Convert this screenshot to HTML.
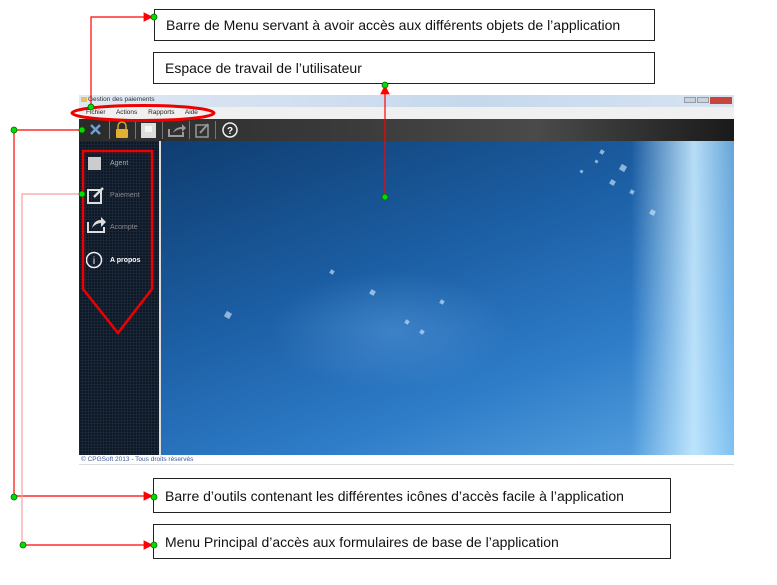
<!DOCTYPE html>
<html><head><meta charset="utf-8"><style>
*{margin:0;padding:0;box-sizing:border-box}
body{width:777px;height:585px;background:#fff;position:relative;overflow:hidden;font-family:"Liberation Sans",sans-serif}
.box{position:absolute;border:1.5px solid #222;background:#fff;font-size:14px;color:#111;padding-left:11px;display:flex;align-items:center;font-family:"Liberation Sans",sans-serif}
.abs{position:absolute}
.sq{position:absolute;background:rgba(220,240,255,.6);transform:rotate(30deg)}
.sep{position:absolute;top:121px;width:1px;height:18px;background:#777}
</style></head><body>
<div class="box" style="left:154px;top:9px;width:501px;height:32px">Barre de Menu servant à avoir accès aux différents objets de l’application</div>
<div class="box" style="left:153px;top:52px;width:502px;height:32px">Espace de travail de l’utilisateur</div>
<div class="box" style="left:153px;top:478px;width:518px;height:35px">Barre d’outils contenant les différentes icônes d’accès facile à l’application</div>
<div class="box" style="left:153px;top:524px;width:518px;height:35px">Menu Principal d’accès aux formulaires de base de l’application</div>

<!-- window -->
<div class="abs" style="left:79px;top:95px;width:655px;height:12px;background:linear-gradient(90deg,#dfe8f3,#c7d8ec 60%,#d6e3f1)"></div>
<div class="abs" style="left:81px;top:97px;width:6px;height:5px;background:#e8c060"></div>
<div class="abs" style="left:88px;top:96px;font-size:6.5px;color:#333">Gestion des paiements</div>
<div class="abs" style="left:684px;top:97px;width:12px;height:6px;background:#c9d3de;border:1px solid #99a"></div>
<div class="abs" style="left:697px;top:97px;width:12px;height:6px;background:#c9d3de;border:1px solid #99a"></div>
<div class="abs" style="left:710px;top:97px;width:22px;height:7px;background:#c8453a"></div>
<div class="abs" style="left:79px;top:107px;width:655px;height:12px;background:#f0f0f0"></div>
<div class="abs" style="left:86px;top:109px;font-size:6.5px;color:#222;word-spacing:9px">Fichier Actions Rapports Aide</div>
<div class="abs" style="left:79px;top:119px;width:655px;height:22px;background:linear-gradient(90deg,#2a2a2a,#3a3a3a 40%,#4a4a4a 70%,#1a1a1a)"></div>
<div class="sep" style="left:109px"></div><div class="sep" style="left:135px"></div><div class="sep" style="left:162px"></div><div class="sep" style="left:189px"></div><div class="sep" style="left:215px"></div>
<svg class="abs" style="left:79px;top:119px" width="180" height="22">
<path d="M12,6L21,15M21,6L12,15" stroke="#6aa0d8" stroke-width="2.5"/>
<path d="M39,10V7a4,4 0 0 1 8,0V10" fill="none" stroke="#d9a428" stroke-width="1.5"/>
<rect x="37" y="10" width="12" height="9" rx="1" fill="#e0b030"/>
<rect x="62" y="4" width="15" height="15" fill="#ddd"/><rect x="66" y="7" width="7" height="6" fill="#f4f4f4"/>
<path d="M90,10V17H104V13" fill="none" stroke="#999" stroke-width="2"/><path d="M94,14Q96,8 103,8V5L107,9L103,13V10Q98,10 94,14Z" fill="#999"/>
<rect x="117" y="6" width="12" height="12" fill="none" stroke="#999" stroke-width="1.5"/><path d="M121,14L129,5" stroke="#999" stroke-width="2"/>
<circle cx="151" cy="11" r="7" fill="none" stroke="#eee" stroke-width="1.5"/>
<text x="151" y="15" text-anchor="middle" font-size="10" font-weight="bold" fill="#fff" font-family="Liberation Sans">?</text>
</svg>
<div class="abs" style="left:79px;top:141px;width:80px;height:314px;background:#0d1826;background-image:linear-gradient(#1a2535 1px,transparent 1px),linear-gradient(90deg,#1a2535 1px,transparent 1px);background-size:3px 3px"></div>
<div class="abs" style="left:159px;top:141px;width:2px;height:314px;background:#ddd"></div>
<div class="abs" style="left:161px;top:141px;width:573px;height:314px;background:radial-gradient(ellipse 120px 60px at 230px 190px,rgba(120,180,240,.3),transparent),linear-gradient(90deg,transparent 82%,rgba(200,235,255,.9) 93%,rgba(150,210,250,.6)),linear-gradient(160deg,#0f3d70,#1c5fa5 40%,#2e7cc8 70%,#5aa5e2)"></div>
<div class="sq" style="left:600px;top:150px;width:4px;height:4px"></div><div class="sq" style="left:620px;top:165px;width:6px;height:6px"></div><div class="sq" style="left:630px;top:190px;width:4px;height:4px"></div><div class="sq" style="left:370px;top:290px;width:5px;height:5px"></div><div class="sq" style="left:405px;top:320px;width:4px;height:4px"></div><div class="sq" style="left:225px;top:312px;width:6px;height:6px"></div><div class="sq" style="left:330px;top:270px;width:4px;height:4px"></div><div class="sq" style="left:580px;top:170px;width:3px;height:3px"></div><div class="sq" style="left:440px;top:300px;width:4px;height:4px"></div><div class="sq" style="left:650px;top:210px;width:5px;height:5px"></div><div class="sq" style="left:420px;top:330px;width:4px;height:4px"></div><div class="sq" style="left:610px;top:180px;width:5px;height:5px"></div><div class="sq" style="left:595px;top:160px;width:3px;height:3px"></div>
<div class="abs" style="left:79px;top:455px;width:655px;height:10px;background:#fff;border-bottom:1px solid #ddd"></div>
<div class="abs" style="left:81px;top:456px;font-size:6.5px;color:#3a5aa0">© CPGSoft 2013 - Tous droits réservés</div>
<!-- sidebar items -->
<div class="abs" style="left:88px;top:157px;width:13px;height:13px;background:#ccc"></div>
<div class="abs" style="left:110px;top:160px;font-size:7px;color:#aaa">Agent</div>
<svg class="abs" style="left:86px;top:186px" width="100" height="90">
<rect x="2" y="4" width="13" height="13" fill="none" stroke="#ddd" stroke-width="2"/><path d="M8,11L17,2" stroke="#ddd" stroke-width="2.5"/>
<path d="M2,36V46H18V41" fill="none" stroke="#ddd" stroke-width="2"/><path d="M6,42Q8,34 15,34V31L20,36L15,41V37Q10,37 6,42Z" fill="#ddd"/>
<circle cx="8" cy="74" r="7.5" fill="none" stroke="#eee" stroke-width="1.5"/><text x="8" y="78" text-anchor="middle" font-size="10" fill="#fff" font-family="Liberation Sans">i</text>
</svg>
<div class="abs" style="left:110px;top:192px;font-size:7px;color:#888">Paiement</div>
<div class="abs" style="left:110px;top:224px;font-size:7px;color:#888">Acompte</div>
<div class="abs" style="left:110px;top:257px;font-size:7px;color:#fff;font-weight:bold">A propos</div>

<svg class="abs" style="left:0;top:0" width="777" height="585">
<defs><marker id="a" markerWidth="8" markerHeight="8" refX="7" refY="4" orient="auto"><path d="M0,0L8,4L0,8z" fill="#f00"/></marker></defs>
<ellipse cx="143" cy="113" rx="71" ry="7.5" fill="none" stroke="#e00" stroke-width="3"/>
<path d="M83,151H152V289L118,333L83,289Z" fill="none" stroke="#e00" stroke-width="2.5"/>
<g fill="none" stroke-width="1.2">
<path d="M91,107V17H152" stroke="#f00" marker-end="url(#a)"/>
<path d="M385,197V86" stroke="#f00" marker-end="url(#a)"/>
<path d="M82,130H14V496H152" stroke="#f00" marker-end="url(#a)"/>
<path d="M82,194H22V545" stroke="#f8a0a0"/>
<path d="M22,545H152" stroke="#f00" marker-end="url(#a)"/>
</g>
<g fill="#0d0" stroke="#060" stroke-width=".8">
<circle cx="91" cy="107" r="3"/><circle cx="154" cy="17" r="3"/><circle cx="385" cy="85" r="3"/><circle cx="385" cy="197" r="3"/>
<circle cx="14" cy="130" r="3"/><circle cx="82" cy="130" r="3"/><circle cx="82" cy="194" r="3"/>
<circle cx="14" cy="497" r="3"/><circle cx="154" cy="497" r="3"/><circle cx="23" cy="545" r="3"/><circle cx="154" cy="545" r="3"/>
</g>
</svg>
</body></html>
